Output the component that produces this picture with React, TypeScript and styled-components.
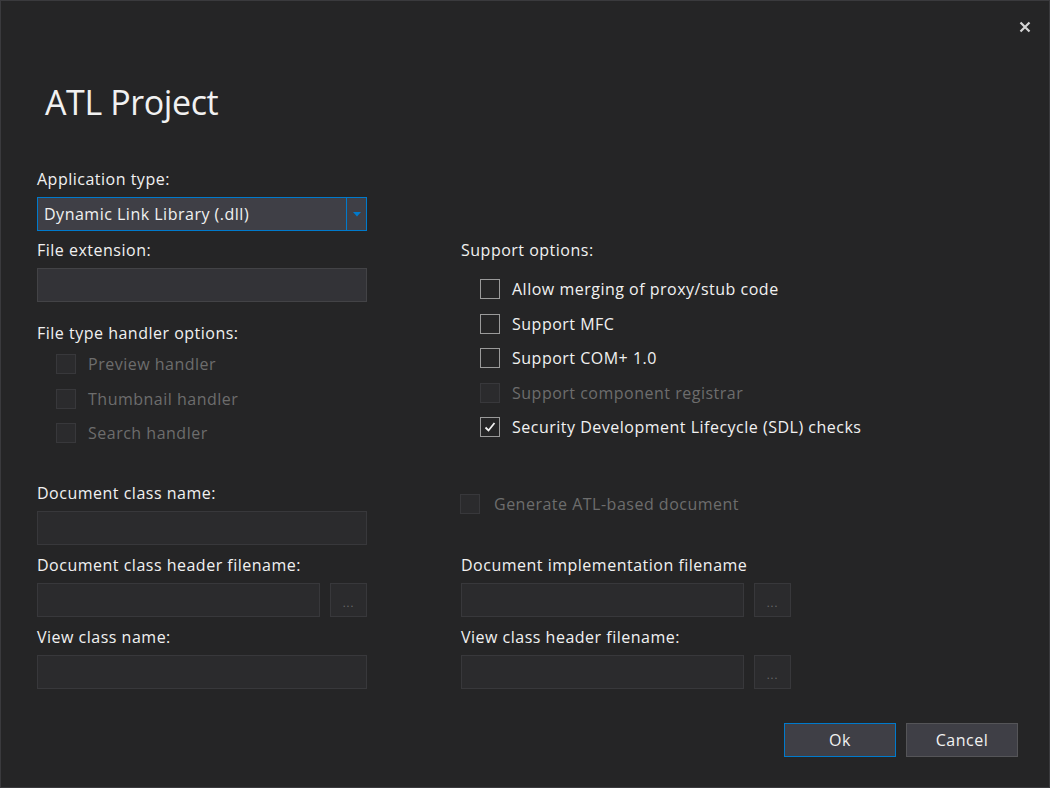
import React from "react";
import styled, { createGlobalStyle } from "styled-components";

const Global = createGlobalStyle`
  html, body { margin: 0; padding: 0; background: #252526; }
  * { box-sizing: border-box; }
  body { font-family: "Open Sans", "Noto Sans", "Liberation Sans", sans-serif; }
`;

const Window = styled.div`
  width: 1050px;
  height: 788px;
  background: #252526;
  border: 1px solid #3a3a3d;
  display: flex;
  flex-direction: column;
  color: #f1f1f1;
  font-size: 16px;
  letter-spacing: 0.5px;
  overflow: hidden;
`;

const TitleBar = styled.div`
  height: 51px;
  display: flex;
  align-items: center;
  justify-content: flex-end;
  padding-right: 17px;
`;

const CloseButton = styled.button`
  width: 14px;
  height: 14px;
  padding: 0;
  border: none;
  background: transparent;
  display: flex;
  align-items: center;
  justify-content: center;
  cursor: pointer;
`;

const Content = styled.div`
  padding: 0 32px 0 36px;
  display: flex;
  flex-direction: column;
`;

const Title = styled.h1`
  margin: 28px 0 0 8px;
  font-size: 34px;
  line-height: 44px;
  font-weight: 400;
  color: #f1f1f1;
  letter-spacing: -0.4px;
`;

const Label = styled.div<{ $clip?: boolean }>`
  height: 22px;
  line-height: 22px;
  margin-bottom: 7px;
  white-space: nowrap;
  color: #f1f1f1;
  ${(p) => (p.$clip ? "overflow: hidden; width: 286px;" : "")}
`;

const Field = styled.div<{ $mt?: number }>`
  display: flex;
  flex-direction: column;
  width: 330px;
  margin-top: ${(p) => p.$mt ?? 0}px;
`;

const Select = styled.div`
  height: 34px;
  width: 330px;
  display: flex;
  border: 1px solid #007acc;
  background: #3f3f46;
`;

const SelectText = styled.div`
  flex: 1;
  padding-left: 6px;
  line-height: 32px;
  color: #f1f1f1;
`;

const SelectArrow = styled.div`
  width: 20px;
  border-left: 1px solid #007acc;
  display: flex;
  align-items: center;
  justify-content: center;
`;

const Input = styled.div<{ $disabled?: boolean; $w?: number }>`
  height: 34px;
  width: ${(p) => p.$w ?? 330}px;
  background: ${(p) => (p.$disabled ? "#2b2b2d" : "#333337")};
  border: 1px solid ${(p) => (p.$disabled ? "#38383b" : "#434346")};
`;

const BrowseRow = styled.div`
  display: flex;
  gap: 10px;
`;

const BrowseButton = styled.div`
  width: 37px;
  height: 34px;
  background: #2b2b2d;
  border: 1px solid #38383b;
  color: #6d6d6d;
  font-size: 11px;
  display: flex;
  justify-content: center;
  align-items: center;
  padding-top: 6px;
  letter-spacing: 1px;
`;

const Columns = styled.div`
  display: grid;
  grid-template-columns: 330px 330px;
  column-gap: 94px;
  margin-top: 8px;
  align-items: start;
`;

const Column = styled.div`
  display: flex;
  flex-direction: column;
`;

const HeaderLabel = styled.div<{ $mt?: number }>`
  height: 22px;
  line-height: 22px;
  margin-top: ${(p) => p.$mt ?? 0}px;
  white-space: nowrap;
`;

const CheckList = styled.div<{ $mt: number; $indent: number }>`
  display: flex;
  flex-direction: column;
  margin-top: ${(p) => p.$mt}px;
  padding-left: ${(p) => p.$indent}px;
`;

const CheckRow = styled.label<{ $disabled?: boolean; $gap?: number }>`
  height: 34.5px;
  display: flex;
  align-items: center;
  gap: ${(p) => p.$gap ?? 12}px;
  color: ${(p) => (p.$disabled ? "#6d6d6d" : "#f1f1f1")};
  white-space: nowrap;
`;

const Box = styled.span<{ $disabled?: boolean }>`
  width: 20px;
  height: 20px;
  flex: none;
  display: flex;
  align-items: center;
  justify-content: center;
  border: 1px solid ${(p) => (p.$disabled ? "#38383b" : "#9a9a9a")};
  background: ${(p) => (p.$disabled ? "#2b2b2d" : "transparent")};
`;

const Grid = styled.div`
  display: grid;
  grid-template-columns: 330px 330px;
  column-gap: 94px;
  row-gap: 9px;
  margin-top: 31px;
`;

const GenerateWrap = styled.div`
  margin-top: 5px;
  margin-left: -1px;
`;

const Footer = styled.div`
  display: flex;
  justify-content: flex-end;
  gap: 10px;
  padding-right: 31px;
  margin-top: 34px;
`;

const Button = styled.button<{ $primary?: boolean }>`
  width: 112px;
  height: 34px;
  background: #3f3f46;
  border: 1px solid ${(p) => (p.$primary ? "#007acc" : "#555558")};
  color: #f1f1f1;
  font-family: inherit;
  font-size: 16px;
  letter-spacing: 0.5px;
  padding: 0;
`;

type CheckProps = { label: string; checked?: boolean; disabled?: boolean; gap?: number };

const Check = ({ label, checked, disabled, gap }: CheckProps) => (
  <CheckRow $disabled={disabled} $gap={gap}>
    <Box $disabled={disabled}>
      {checked && (
        <svg width="14" height="14" viewBox="0 0 14 14">
          <polyline points="2.5,7.5 5.5,10.5 11.5,3" fill="none" stroke="#f1f1f1" strokeWidth="1.8" />
        </svg>
      )}
    </Box>
    {label}
  </CheckRow>
);

const BrowseField = ({ label, clip }: { label: string; clip?: boolean }) => (
  <Field>
    <Label $clip={clip}>{label}</Label>
    <BrowseRow>
      <Input $disabled $w={283} />
      <BrowseButton>...</BrowseButton>
    </BrowseRow>
  </Field>
);

export default function App() {
  return (
    <>
      <Global />
      <Window>
        <TitleBar>
          <CloseButton aria-label="Close">
            <svg width="12" height="12" viewBox="0 0 12 12">
              <path d="M1.5 1.5 L10.5 10.5 M10.5 1.5 L1.5 10.5" stroke="#d4d4d4" strokeWidth="2.2" />
            </svg>
          </CloseButton>
        </TitleBar>
        <Content>
          <Title>ATL Project</Title>
          <Field $mt={44}>
            <Label>Application type:</Label>
            <Select>
              <SelectText>Dynamic Link Library (.dll)</SelectText>
              <SelectArrow>
                <svg width="8" height="5" viewBox="0 0 8 5">
                  <polygon points="0,0 8,0 4,4.5" fill="#007acc" />
                </svg>
              </SelectArrow>
            </Select>
          </Field>
          <Columns>
            <Column>
              <Field>
                <Label>File extension:</Label>
                <Input />
              </Field>
              <HeaderLabel $mt={20}>File type handler options:</HeaderLabel>
              <CheckList $mt={3} $indent={19}>
                <Check label="Preview handler" disabled />
                <Check label="Thumbnail handler" disabled />
                <Check label="Search handler" disabled />
              </CheckList>
            </Column>
            <Column>
              <HeaderLabel>Support options:</HeaderLabel>
              <CheckList $mt={11} $indent={19}>
                <Check label="Allow merging of proxy/stub code" />
                <Check label="Support MFC" />
                <Check label="Support COM+ 1.0" />
                <Check label="Support component registrar" disabled />
                <Check label="Security Development Lifecycle (SDL) checks" checked />
              </CheckList>
            </Column>
          </Columns>
          <Grid>
            <Field>
              <Label>Document class name:</Label>
              <Input $disabled />
            </Field>
            <GenerateWrap>
              <Check label="Generate ATL-based document" disabled gap={14} />
            </GenerateWrap>
            <BrowseField label="Document class header filename:" />
            <BrowseField label="Document implementation filename:" clip />
            <Field>
              <Label>View class name:</Label>
              <Input $disabled />
            </Field>
            <BrowseField label="View class header filename:" />
          </Grid>
        </Content>
        <Footer>
          <Button $primary>Ok</Button>
          <Button>Cancel</Button>
        </Footer>
      </Window>
    </>
  );
}
